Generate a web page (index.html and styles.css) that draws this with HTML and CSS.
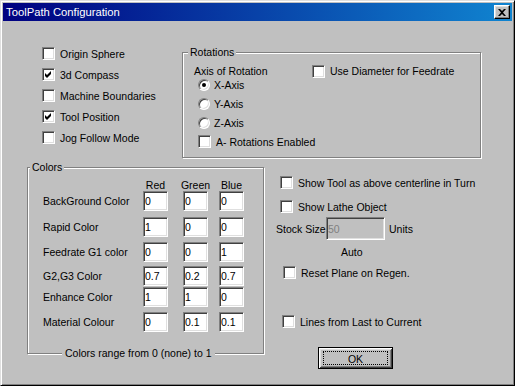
FILE: index.html
```html
<!DOCTYPE html>
<html lang="en">
<head>
    <meta charset="UTF-8">
    <meta name="viewport" content="width=device-width, initial-scale=1.0">
    <title>ToolPath Configuration</title>
    <link rel="stylesheet" href="styles.css">
</head>
<body>
<div class="window">
    <div class="titlebar">
        <span class="title">ToolPath Configuration</span>
        <span class="close"><svg width="8" height="7" viewBox="0 0 8 7"><path d="M0 0h2l2 2 2-2h2L5 3.5 8 7H6L4 5 2 7H0l3-3.5z"/></svg></span>
    </div>

    <div class="client">
        <div class="top">
            <div class="checklist">
                <label class="opt"><span class="check"></span>Origin Sphere</label>
                <label class="opt"><span class="check"><svg width="7" height="7" viewBox="0 0 7 7"><path d="M0 2l2 2 4-4v3L2 7 0 5z"/></svg></span>3d Compass</label>
                <label class="opt"><span class="check"></span>Machine Boundaries</label>
                <label class="opt"><span class="check"><svg width="7" height="7" viewBox="0 0 7 7"><path d="M0 2l2 2 4-4v3L2 7 0 5z"/></svg></span>Tool Position</label>
                <label class="opt"><span class="check"></span>Jog Follow Mode</label>
            </div>

            <div class="group rotations">
                <span class="group-label">Rotations</span>
                <div class="rot-head">
                    <span class="axis-title">Axis of Rotation</span>
                    <label class="opt small"><span class="check"></span>Use Diameter for Feedrate</label>
                </div>
                <div class="axis-list">
                    <label class="radio-row"><span class="radio on"></span>X-Axis</label>
                    <label class="radio-row"><span class="radio"></span>Y-Axis</label>
                    <label class="radio-row"><span class="radio"></span>Z-Axis</label>
                    <label class="opt small rot-row"><span class="check"></span>A- Rotations Enabled</label>
                </div>
            </div>
        </div>

        <div class="bottom">
            <div class="group colors">
                <span class="group-label">Colors</span>
                <div class="color-grid">
                    <span></span>
                    <span class="head">Red</span>
                    <span class="head">Green</span>
                    <span class="head">Blue</span>

                    <span class="name">BackGround Color</span>
                    <input class="field" type="text" value="0">
                    <input class="field" type="text" value="0">
                    <input class="field" type="text" value="0">

                    <span class="name">Rapid Color</span>
                    <input class="field" type="text" value="1">
                    <input class="field" type="text" value="0">
                    <input class="field" type="text" value="0">

                    <span class="name">Feedrate G1 color</span>
                    <input class="field" type="text" value="0">
                    <input class="field" type="text" value="0">
                    <input class="field" type="text" value="1">

                    <span class="name">G2,G3 Color</span>
                    <input class="field" type="text" value="0.7">
                    <input class="field" type="text" value="0.2">
                    <input class="field" type="text" value="0.7">

                    <span class="name">Enhance Color</span>
                    <input class="field" type="text" value="1">
                    <input class="field" type="text" value="1">
                    <input class="field" type="text" value="0">

                    <span class="name">Material Colour</span>
                    <input class="field" type="text" value="0">
                    <input class="field" type="text" value="0.1">
                    <input class="field" type="text" value="0.1">
                </div>
                <span class="group-foot">Colors range from 0 (none) to 1</span>
            </div>

            <div class="side">
                <label class="opt small show-tool"><span class="check"></span>Show Tool as above centerline in Turn</label>
                <label class="opt small show-lathe"><span class="check"></span>Show Lathe Object</label>
                <div class="stock">
                    <span class="stock-label">Stock Size</span>
                    <input class="field stock-field" type="text" value="50" disabled>
                    <span>Units</span>
                </div>
                <span class="auto">Auto</span>
                <label class="opt small reset"><span class="check"></span>Reset Plane on Regen.</label>
                <label class="opt small lines"><span class="check"></span>Lines from Last to Current</label>
                <button class="ok" type="button"><span class="focus">OK</span></button>
            </div>
        </div>
    </div>
</div>
</body>
</html>
```

FILE: styles.css
```css
body {
    margin: 0;
    font-family: "Liberation Sans", Arial, sans-serif;
    font-size: 10.5px;
    color: #000;
    background: #c0c0c0;
}
.window {
    width: 515px;
    height: 386px;
    box-sizing: border-box;
    background: #c0c0c0;
    border: 1px solid;
    border-color: #dfdfdf #000 #000 #dfdfdf;
    box-shadow: inset 1px 1px #fff, inset -1px -1px #808080;
    padding: 2px;
}
.titlebar {
    height: 18px;
    display: flex;
    align-items: center;
    justify-content: space-between;
    padding: 0 2px 0 3px;
    background: linear-gradient(to right, #000080, #1084d0);
    color: #fff;
}
.title {
    font-size: 11.25px;
    line-height: 14px;
}
.close {
    width: 16px;
    height: 14px;
    box-sizing: border-box;
    display: flex;
    align-items: center;
    justify-content: center;
    background: #c0c0c0;
    border: 1px solid;
    border-color: #fff #000 #000 #fff;
    box-shadow: inset -1px -1px #808080, inset 1px 1px #dfdfdf;
}

/* checkbox / radio */
.opt {
    display: flex;
    align-items: center;
    gap: 5px;
    height: 21px;
    white-space: nowrap;
}
.opt.small {
    height: 13px;
}
.check {
    width: 13px;
    height: 13px;
    box-sizing: border-box;
    flex: none;
    display: flex;
    align-items: center;
    justify-content: center;
    background: #fff;
    border: 1px solid;
    border-color: #808080 #fff #fff #808080;
    box-shadow: inset 1px 1px #404040, inset -1px -1px #dfdfdf;
}
.radio-row {
    display: flex;
    align-items: center;
    gap: 4px;
    height: 19px;
}
.radio {
    width: 12px;
    height: 12px;
    box-sizing: border-box;
    flex: none;
    display: flex;
    align-items: center;
    justify-content: center;
    border-radius: 50%;
    background: #fff;
    border: 1px solid;
    border-color: #808080 #fff #fff #808080;
    box-shadow: inset 1px 1px #404040, inset -1px -1px #dfdfdf;
}
.radio.on::after {
    content: "";
    width: 4px;
    height: 4px;
    border-radius: 50%;
    background: #000;
}

/* group boxes */
.group {
    position: relative;
    box-sizing: border-box;
    border: 1px solid #808080;
    box-shadow: inset 1px 1px #fff, 1px 1px #fff;
}
.group-label, .group-foot {
    position: absolute;
    line-height: 12px;
    background: #c0c0c0;
    padding: 0 2px;
    white-space: nowrap;
}
.group-label {
    top: -7px;
}

.client {
    padding-top: 22px;
}
.top {
    display: flex;
    align-items: flex-start;
    padding-left: 39px;
}
.checklist {
    width: 140px;
}
.rotations {
    margin-top: 9px;
    width: 299px;
    height: 106px;
    padding: 12px 0 0 11px;
}
.rotations .group-label {
    left: 5px;
}
.rot-head {
    display: flex;
    align-items: center;
    height: 12px;
}
.axis-title {
    width: 118px;
}
.axis-list {
    margin: -2px 0 0 4px;
}
.rot-row {
    margin-top: 3px;
}

.bottom {
    display: flex;
    align-items: flex-start;
    margin-top: 9px;
    padding-left: 24px;
}
.colors {
    width: 237px;
    height: 187px;
    padding: 11px 0 0 15px;
}
.colors .group-label {
    left: 2px;
}
.group-foot {
    left: 34px;
    bottom: -6px;
    padding: 0 3px;
}
.color-grid {
    display: grid;
    grid-template-columns: 100px 40px 36px 25px;
    grid-template-rows: 12px 26px 25px 24px 21px 25px 20px;
    align-items: start;
}
.head {
    width: 25px;
    display: flex;
    justify-content: center;
    line-height: 12px;
    white-space: nowrap;
}
.name {
    line-height: 20px;
    white-space: nowrap;
}
.field {
    width: 25px;
    height: 20px;
    box-sizing: border-box;
    margin: 0;
    padding: 0 1px;
    font: inherit;
    color: #000;
    background: #fff;
    border: 1px solid;
    border-color: #808080 #fff #fff #808080;
    box-shadow: inset 1px 1px #404040, inset -1px -1px #dfdfdf;
    outline: none;
}

.side {
    display: flex;
    flex-direction: column;
    align-items: flex-start;
    margin-left: 12px;
}
.show-tool {
    margin: 9px 0 0 4px;
}
.show-lathe {
    margin: 11px 0 0 4px;
}
.stock {
    display: flex;
    align-items: center;
    gap: 2px;
    margin-top: 4px;
}
.stock-label {
    width: 48px;
    white-space: nowrap;
}
.stock-field {
    width: 59px;
    height: 23px;
    margin-right: 2px;
    background: #c0c0c0;
    color: #808080;
    -webkit-text-fill-color: #808080;
}
.auto {
    margin: 5px 0 0 65px;
    line-height: 14px;
}
.reset {
    margin: 7px 0 0 7px;
}
.lines {
    margin: 36px 0 0 6px;
}
.ok {
    margin: 19px 0 0 42px;
    width: 75px;
    height: 22px;
    padding: 3px 4px;
    box-sizing: border-box;
    font: inherit;
    background: #c0c0c0;
    border: 1px solid #000;
    box-shadow: inset 1px 1px #fff, inset -1px -1px #404040, inset 2px 2px #dfdfdf, inset -2px -2px #808080;
}
.focus {
    display: block;
    height: 100%;
    box-sizing: border-box;
    border: 1px dotted #000;
    line-height: 14px;
}
```
